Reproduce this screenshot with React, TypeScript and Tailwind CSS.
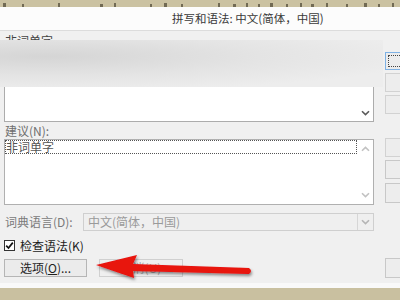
import React from "react";

const Chevron = ({ dir = "down", color = "#555" }: { dir?: "up" | "down"; color?: string }) => (
  <svg width="9" height="6" viewBox="0 0 9 6">
    {dir === "down" ? (
      <path d="M1 1.2 L4.5 4.6 L8 1.2" fill="none" stroke={color} strokeWidth="1.6" />
    ) : (
      <path d="M1 4.8 L4.5 1.4 L8 4.8" fill="none" stroke={color} strokeWidth="1.6" />
    )}
  </svg>
);

const ticks = [3, 22, 58, 100, 114, 150, 164, 181, 218, 233, 246, 258, 270, 286, 300, 311, 326, 346, 364, 378, 392];

export default function App() {
  return (
    <div className="relative w-[400px] h-[300px] overflow-hidden flex flex-col font-['Noto_Sans_CJK_SC',sans-serif] text-[12px] bg-[#f0f0f0]">
      {/* top strip */}
      <div className="h-[7px] bg-[#cbc2a2] shrink-0">
        <svg width="400" height="7">
          {ticks.map((x, i) => (
            <rect key={i} x={x} y={i % 2 ? 4 : 3} width={i % 3 ? 2 : 3} height={i % 2 ? 3 : 4} fill="#4a4433" opacity="0.7" />
          ))}
        </svg>
      </div>
      {/* title bar */}
      <div className="h-[24px] shrink-0 bg-[#fcfcfc] border-b border-[#dcdcdc] pl-[172px] text-[11.5px] leading-[23px] text-[#3a3a3a]">
        拼写和语法: 中文(简体，中国)
      </div>
      {/* body */}
      <div className="h-[252px] shrink-0 flex bg-[#f0f0f0]">
        <div className="w-[383px] shrink-0 flex flex-col">
          <div className="h-[9px] overflow-hidden pl-[5px] pt-[4px] leading-[12px] text-[#444]">非词单字</div>
          <div className="h-[47px] bg-[radial-gradient(ellipse_at_12%_35%,#d5d5d5,#e4e4e4_45%,#ededed_80%)]" />
          <div className="ml-[4px] w-[370px] h-[35px] bg-white border border-[#acacac] border-t-0 flex justify-end">
            <div className="w-[16px] flex flex-col justify-end items-center pb-[5px]">
              <Chevron color="#5a5a5a" />
            </div>
          </div>
          <div className="h-[17px] pl-[5px] leading-[17px] text-[#6e6e6e]">建议(N):</div>
          <div className="ml-[4px] w-[370px] h-[66px] bg-white border border-[#b0b0b0] flex">
            <div className="flex-1">
              <div className="h-[14px] border border-dotted border-[#555] leading-[12px] text-[#555]">非词单字</div>
            </div>
            <div className="w-[16px] flex flex-col justify-between items-center py-[6px]">
              <Chevron dir="up" color="#c2c2c2" />
              <Chevron color="#c2c2c2" />
            </div>
          </div>
          <div className="mt-[8px] ml-[4px] h-[18px] flex items-center">
            <div className="w-[79px] pl-[1px] text-[#7a7a7a]">词典语言(D):</div>
            <div className="w-[291px] h-[18px] bg-[#efefef] border border-[#cfcfcf] flex">
              <div className="flex-1 pl-[4px] leading-[16px] text-[#9a9a9a]">中文(简体，中国)</div>
              <div className="w-[16px] border-l border-[#d6d6d6] flex items-center justify-center">
                <Chevron color="#b5b5b5" />
              </div>
            </div>
          </div>
          <div className="mt-[9px] ml-[4px] h-[11px] flex items-center">
            <div className="w-[11px] h-[11px] bg-white border border-[#333] flex items-center justify-center">
              <svg width="9" height="9" viewBox="0 0 9 9">
                <path d="M1.2 4.6 L3.5 7 L7.8 1.6" fill="none" stroke="#111" strokeWidth="1.7" />
              </svg>
            </div>
            <span className="ml-[5px] text-[#1a1a1a] leading-[12px]">检查语法(K)</span>
          </div>
          <div className="mt-[8px] ml-[4px] h-[18px] flex">
            <div className="w-[83px] h-[18px] bg-[#ebebeb] border border-[#b5b5b5] flex items-center justify-center text-[#1f1f1f] leading-[12px]">
              选项(<span className="underline">O</span>)...
            </div>
            <div className="ml-[12px] w-[84px] h-[18px] bg-[#efefef] border border-[#d0d0d0] flex items-center justify-center text-[#a8a8a8] leading-[12px]">
              撤消(U)
            </div>
          </div>
        </div>
        <div className="ml-[2px] flex flex-col">
          <div className="mt-[21px] w-[80px] h-[18px] bg-[#ececec] border border-[#7fb2e5] p-[2px]">
            <div className="w-full h-full border border-dotted border-[#444]" />
          </div>
          <div className="mt-[3px] w-[80px] h-[19px] bg-[#ededed] border border-[#d2d2d2]" />
          <div className="mt-[3px] w-[80px] h-[19px] bg-[#ededed] border border-[#d2d2d2]" />
          <div className="mt-[24px] w-[80px] h-[19px] bg-[#ededed] border border-[#d2d2d2]" />
          <div className="mt-[3px] w-[80px] h-[19px] bg-[#ededed] border border-[#c8c8c8]" />
          <div className="mt-[4px] w-[80px] h-[20px] bg-[#ededed] border border-[#c8c8c8]" />
          <div className="mt-[55px] w-[80px] h-[20px] bg-[#ededed] border border-[#c8c8c8]" />
        </div>
      </div>
      {/* bottom */}
      <div className="h-[5px] shrink-0 bg-[#f9f9f9]" />
      <div className="flex-1 bg-[#c9c0a0]" />

      {/* red arrow overlay */}
      <svg className="absolute left-0 top-0 pointer-events-none" width="400" height="300">
        <defs>
          <filter id="sh" x="-20%" y="-50%" width="140%" height="200%">
            <feDropShadow dx="1" dy="2" stdDeviation="1.5" floodColor="#000" floodOpacity="0.45" />
          </filter>
        </defs>
        <path
          d="M96 265 L137 255 L133 264 L249 268 Q253 271 249 274 L133 271 L134 278 Z"
          fill="#e8120f"
          filter="url(#sh)"
        />
      </svg>
    </div>
  );
}
